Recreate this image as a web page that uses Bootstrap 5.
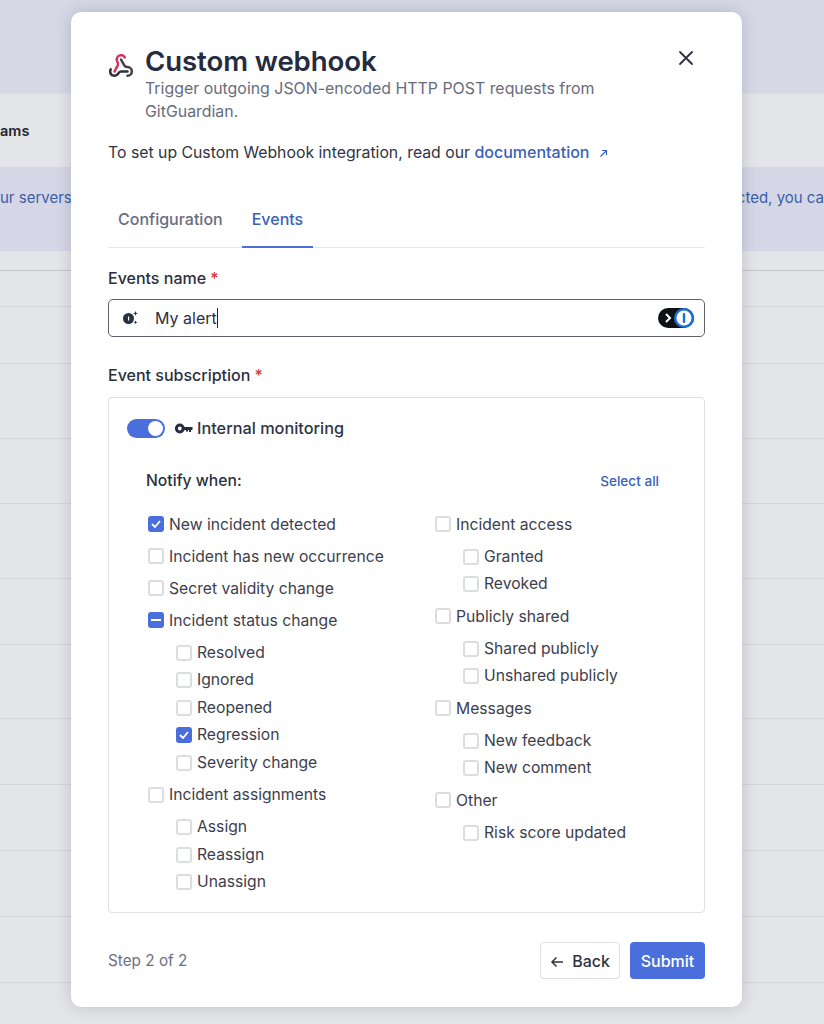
<!DOCTYPE html>
<html lang="en">
<head>
    <meta charset="UTF-8">
    <meta name="viewport" content="width=device-width, initial-scale=1.0">
    <title>Custom webhook</title>
    <link rel="stylesheet" href="https://cdn.jsdelivr.net/npm/bootstrap@5.3.0/dist/css/bootstrap.min.css">
    <style>
        body {
            font-family: Inter, "Liberation Sans", sans-serif;
            background-color: #e4e5e8;
            color: #2b3040;
            height: 1024px;
            overflow: hidden;
        }
        .bg-top { height: 93px; background-color: #d6d8e6; }
        .bg-teams { height: 74px; font-weight: 600; font-size: 14.5px; color: #23262f; padding-top: 26px; border-top: 1px solid #dcdde1; }
        .bg-banner { height: 84px; background-color: #d5d7e7; color: #3d5da8; font-size: 15px; padding-top: 20px; white-space: nowrap; }
        .bg-row { border-bottom: 1px solid #d3d5d9; }
        .bg-row:first-child { border-bottom-color: #c4c6ca; }
        .webhook-modal {
            position: absolute;
            left: 71px;
            top: 12px;
            width: 671px;
            height: 995px;
            background: #fff;
            border-radius: 10px;
            box-shadow: 0 0 16px rgba(40, 45, 70, .2);
            padding: 35px 37px 0;
        }
        .modal-heading { font-size: 27.6px; font-weight: 600; line-height: 30px; margin-top: -1px; margin-bottom: 1px; margin-left: -1px; color: #262b40; letter-spacing: -.1px; }
        .modal-sub { font-size: 15.9px; line-height: 23px; margin-left: -1px; color: #686c7c; }
        .hook-logo { flex: none; margin-top: 6px; }
        .intro-line { font-size: 15.8px; line-height: 20px; margin-top: 19px; color: #30343f; }
        .intro-line a { color: #3a62b8; font-weight: 500; font-size: 16px; text-decoration: none; }
        .close-x { position: absolute; right: 48px; top: 38px; background: none; border: 0; padding: 0; line-height: 0; }
        .hook-tabs { border-bottom: 1px solid #e6e7ea; margin-top: 35px; height: 50px; gap: 9px; }
        .hook-tab { font-size: 16px; font-weight: 500; color: #696d7d; padding: 9px 10px 0; height: 50px; }
        .hook-tab.on { color: #3a62b8; border-bottom: 2px solid #4a6fdc; }
        .field-label { font-size: 16px; font-weight: 500; line-height: 20px; color: #2b3040; }
        .field-label i { color: #e03131; font-style: normal; }
        .label-name { margin-top: 20px; }
        .label-sub { margin-top: 28px; }
        .name-box { height: 38px; border: 1px solid #5d606b; border-radius: 5px; margin-top: 11px; padding: 0 9px 0 12px; font-size: 16px; }
        .caret-bar { display: inline-block; width: 1px; height: 20px; background: #1c2340; vertical-align: -4px; }
        .sub-box { border: 1px solid #dfe0e4; border-radius: 4px; height: 516px; margin-top: 12px; padding: 18px 45px 0 18px; }
        .toggle-track { width: 38px; height: 19px; border-radius: 10px; background: #4a6fdc; position: relative; }
        .toggle-knob { position: absolute; right: 2px; top: 2px; width: 15px; height: 15px; border-radius: 50%; background: #fff; }
        .key-icon { margin: 0 4px 0 10px; }
        .monitor-title { font-size: 16.3px; font-weight: 500; color: #2f3442; }
        .notify-head { padding-left: 19px; margin-top: 31px; height: 20px; line-height: 20px; }
        .notify-head b { font-size: 15.7px; font-weight: 500; color: #2b3040; }
        .notify-head a { font-size: 13.6px; font-weight: 500; color: #3a62b8; text-decoration: none; }
        .event-cols { padding-left: 21px; margin-top: 17px; }
        .event-col-a { width: 287px; }
        .event-item { height: 32px; display: flex; align-items: center; gap: 5px; font-size: 15.7px; color: #3c404d; }
        .event-item.child { padding-left: 28px; height: 27.5px; }
        .event-item:not(.child) + .event-item.child { margin-top: 2.5px; }
        .event-item.child + .event-item:not(.child) { margin-top: 2.5px; }
        .tick-box { width: 16px; height: 16px; border: 2px solid #dcdde1; border-radius: 3px; background: #fff; flex: none; }
        .tick-box.on { background: #4a6fdc; border-color: #4a6fdc; display: flex; align-items: center; justify-content: center; }
        .modal-foot { margin-top: 29px; }
        .step-note { font-size: 15.3px; padding-top: 1px; color: #6c7080; }
        .foot-btns { gap: 10px; }
        .btn-back { height: 37px; width: 80px; border: 1px solid #dfe0e4; border-radius: 4px; background: #fff; color: #30343f; font-size: 16px; font-weight: 500; padding: 0; }
        .btn-send { height: 37px; width: 75px; border: 0; border-radius: 4px; background: #4a6fdc; color: #fff; font-size: 16px; font-weight: 500; padding: 0; }
    </style>
</head>
<body>
    <!-- Page behind the modal -->
    <div class="bg-top"></div>
    <div class="bg-teams">ams</div>
    <div class="bg-banner d-flex justify-content-between">
        <span>ur servers</span><span>cted, you ca</span>
    </div>
    <div id="bgRows"></div>

    <!-- Modal -->
    <div class="webhook-modal">
        <button class="close-x" aria-label="Close">
            <svg width="16" height="16" viewBox="0 0 16 16" fill="none" stroke="#2b3040" stroke-width="1.8" stroke-linecap="round"><path d="M2 2l12 12M14 2L2 14"/></svg>
        </button>
        <div class="d-flex gap-2">
            <svg class="hook-logo me-1" width="26" height="26" viewBox="0 0 24 24" fill="none" stroke-width="2.3" stroke-linecap="round" stroke-linejoin="round">
                <path d="M18 16.98h-5.99c-1.1 0-1.95.94-2.48 1.9A4 4 0 0 1 2 17c.01-.7.2-1.4.57-2" stroke="#2f3142"/>
                <path d="m6 17 3.13-5.78c.53-.97.1-2.18-.5-3.1a4 4 0 1 1 6.89-4.06" stroke="#d6335a"/>
                <path d="m12 6 3.13 5.73C15.66 12.7 16.9 13 18 13a4 4 0 0 1 0 8" stroke="#4a3a4a"/>
            </svg>
            <div>
                <div class="modal-heading">Custom webhook</div>
                <div class="modal-sub">Trigger outgoing JSON-encoded HTTP POST requests from<br>GitGuardian.</div>
            </div>
        </div>
        <div class="intro-line">To set up Custom Webhook integration, read our <a href="#">documentation <svg width="11" height="11" viewBox="0 0 11 11" fill="none" stroke="#3a62b8" stroke-width="1.2" class="ms-1"><path d="M2.5 8.5l6-6M4 2.5h4.5V7"/></svg></a></div>

        <div class="hook-tabs d-flex">
            <div class="hook-tab">Configuration</div>
            <div class="hook-tab on">Events</div>
        </div>

        <div class="field-label label-name">Events name <i>*</i></div>
        <div class="name-box d-flex align-items-center">
            <svg width="18" height="18" viewBox="0 0 18 18" class="me-3"><circle cx="7.5" cy="9.5" r="5.5" fill="#2b3040"/><rect x="7" y="7.5" width="1.2" height="4" fill="#fff"/><path d="M14.5 2l.7 1.7 1.7.7-1.7.7-.7 1.7-.7-1.7-1.7-.7 1.7-.7zM14.5 11.5l.6 1.2 1.2.6-1.2.6-.6 1.2-.6-1.2-1.2-.6 1.2-.6z" fill="#2b3040"/></svg>
            <span>My alert<span class="caret-bar"></span></span>
            <svg class="ms-auto" width="37" height="22" viewBox="0 0 37 22">
                <rect x="0" y="1" width="36" height="20" rx="10" fill="#101114"/>
                <path d="M8 7l4 4-4 4" fill="none" stroke="#fff" stroke-width="2"/>
                <circle cx="26" cy="11" r="10" fill="#1a6fe0"/>
                <circle cx="26" cy="11" r="7.5" fill="#fff"/>
                <rect x="24.8" y="6" width="2.4" height="10" rx="1" fill="#1a6fe0"/>
            </svg>
        </div>

        <div class="field-label label-sub">Event subscription <i>*</i></div>
        <div class="sub-box">
            <div class="d-flex align-items-center">
                <div class="toggle-track"><div class="toggle-knob"></div></div>
                <svg class="key-icon" width="18" height="11" viewBox="0 0 18 11"><circle cx="4.8" cy="5.5" r="3.4" fill="none" stroke="#262b40" stroke-width="3"/><path d="M8 4h9.5v3h-1.5v2h-2V7h-1v1.5h-2V7H8z" fill="#262b40"/></svg>
                <span class="monitor-title">Internal monitoring</span>
            </div>
            <div class="notify-head d-flex justify-content-between">
                <b>Notify when:</b><a href="#">Select all</a>
            </div>
            <div class="event-cols d-flex">
                <div class="event-col-a" id="colA"></div>
                <div id="colB"></div>
            </div>
        </div>

        <div class="modal-foot d-flex align-items-center">
            <span class="step-note">Step 2 of 2</span>
            <div class="ms-auto d-flex foot-btns">
                <button class="btn-back"><svg width="14" height="12" viewBox="0 0 14 12" fill="none" stroke="#30343f" stroke-width="1.5" class="me-1"><path d="M13 6H2M6.5 1.5L2 6l4.5 4.5"/></svg> Back</button>
                <button class="btn-send">Submit</button>
            </div>
        </div>
    </div>

    <script>
        // rows behind the modal
        var rowHeights = [20, 36, 57, 75, 65, 75, 66, 74, 66, 66, 66, 66];
        document.getElementById('bgRows').innerHTML = rowHeights.map(function (h) {
            return '<div class="bg-row" style="height:' + h + 'px"></div>';
        }).join('');

        // [label, child?, state]
        var colA = [
            ['New incident detected', 0, 'check'], ['Incident has new occurrence', 0], ['Secret validity change', 0],
            ['Incident status change', 0, 'dash'], ['Resolved', 1], ['Ignored', 1], ['Reopened', 1],
            ['Regression', 1, 'check'], ['Severity change', 1], ['Incident assignments', 0],
            ['Assign', 1], ['Reassign', 1], ['Unassign', 1]
        ];
        var colB = [
            ['Incident access', 0], ['Granted', 1], ['Revoked', 1], ['Publicly shared', 0],
            ['Shared publicly', 1], ['Unshared publicly', 1], ['Messages', 0], ['New feedback', 1],
            ['New comment', 1], ['Other', 0], ['Risk score updated', 1]
        ];
        var marks = {
            check: '<svg width="10" height="8" viewBox="0 0 10 8" fill="none" stroke="#fff" stroke-width="1.8"><path d="M1 4l3 3 5-6"/></svg>',
            dash: '<svg width="10" height="2" viewBox="0 0 10 2"><rect width="10" height="2" fill="#fff"/></svg>'
        };
        function fillCol(id, items) {
            document.getElementById(id).innerHTML = items.map(function (it) {
                var box = it[2] ? '<span class="tick-box on">' + marks[it[2]] + '</span>' : '<span class="tick-box"></span>';
                return '<div class="event-item' + (it[1] ? ' child' : '') + '">' + box + '<span>' + it[0] + '</span></div>';
            }).join('');
        }
        fillCol('colA', colA);
        fillCol('colB', colB);
    </script>
</body>
</html>
